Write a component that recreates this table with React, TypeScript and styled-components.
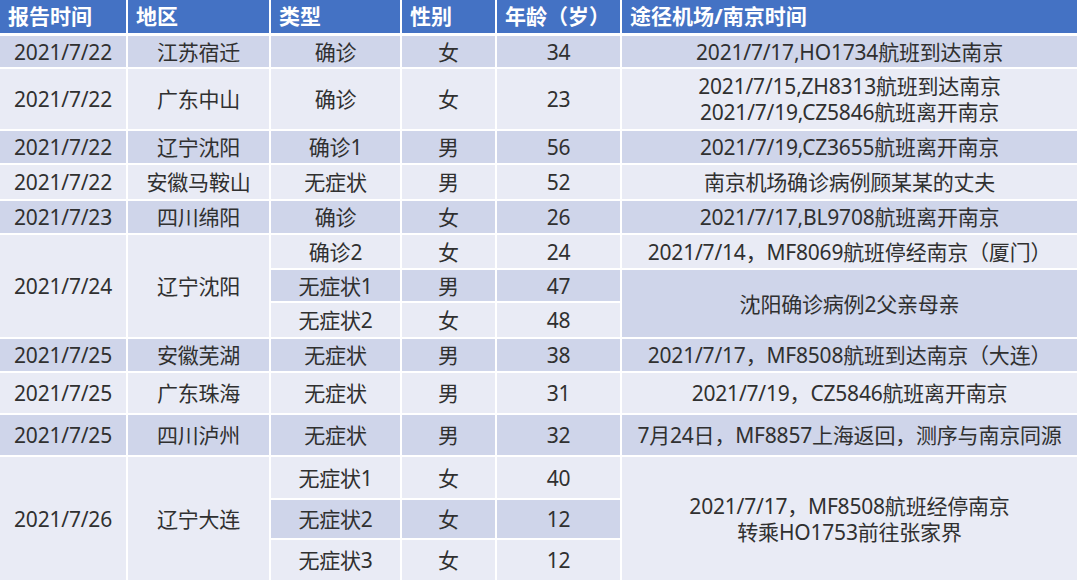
import styled, { createGlobalStyle } from 'styled-components';

const GlobalStyle = createGlobalStyle`
	html, body {
		margin: 0;
		padding: 0;
		background: #ffffff;
	}
	body {
		font-family: 'Noto Sans', 'Noto Sans CJK SC', sans-serif;
	}
`;

const Table = styled.table`
	border-collapse: separate;
	border-spacing: 0;
	table-layout: fixed;
	width: 1079px;
	font-size: 21px;
	color: #303030;
`;

const HeadRow = styled.tr`
	height: 36px;
`;

const HeadCell = styled.th<{ $w: number }>`
	box-sizing: border-box;
	width: ${({ $w }) => $w}px;
	padding: 0 0 0 8px;
	background: #4472c4;
	color: #ffffff;
	font-weight: 700;
	text-align: left;
	white-space: nowrap;
	border-right: 2px solid #ffffff;
	border-bottom: 3px solid #ffffff;
	line-height: 1;
`;

const Row = styled.tr<{ $h: number }>`
	height: ${({ $h }) => $h}px;
`;

const Cell = styled.td<{ $dark: boolean }>`
	box-sizing: border-box;
	padding: 0;
	background: ${({ $dark }) => ($dark ? '#cfd5ea' : '#e9ebf5')};
	text-align: center;
	vertical-align: middle;
	white-space: nowrap;
	line-height: 26px;
	letter-spacing: -0.2px;
	border-right: 2px solid #ffffff;
	border-bottom: 2px solid #ffffff;
`;

const Line = styled.div`
	display: block;
`;

interface CellData {
	text: string | string[];
	span?: number;
}

interface RowData {
	h: number;
	dark: boolean;
	cells: CellData[];
}

const columns = [
	{ title: '报告时间', w: 128 },
	{ title: '地区', w: 143 },
	{ title: '类型', w: 131 },
	{ title: '性别', w: 95 },
	{ title: '年龄（岁）', w: 125 },
	{ title: '途径机场/南京时间', w: 457 },
];

const c = (...texts: string[]): CellData[] => texts.map((text) => ({ text }));

const rows: RowData[] = [
	{ h: 33, dark: true, cells: c('2021/7/22', '江苏宿迁', '确诊', '女', '34', '2021/7/17,HO1734航班到达南京') },
	{
		h: 62,
		dark: false,
		cells: [
			...c('2021/7/22', '广东中山', '确诊', '女', '23'),
			{ text: ['2021/7/15,ZH8313航班到达南京', '2021/7/19,CZ5846航班离开南京'] },
		],
	},
	{ h: 34, dark: true, cells: c('2021/7/22', '辽宁沈阳', '确诊1', '男', '56', '2021/7/19,CZ3655航班离开南京') },
	{ h: 36, dark: false, cells: c('2021/7/22', '安徽马鞍山', '无症状', '男', '52', '南京机场确诊病例顾某某的丈夫') },
	{ h: 34, dark: true, cells: c('2021/7/23', '四川绵阳', '确诊', '女', '26', '2021/7/17,BL9708航班离开南京') },
	{
		h: 35,
		dark: false,
		cells: [
			{ text: '2021/7/24', span: 3 },
			{ text: '辽宁沈阳', span: 3 },
			...c('确诊2', '女', '24', '2021/7/14，MF8069航班停经南京（厦门）'),
		],
	},
	{ h: 33, dark: true, cells: [...c('无症状1', '男', '47'), { text: '沈阳确诊病例2父亲母亲', span: 2 }] },
	{ h: 36, dark: false, cells: c('无症状2', '女', '48') },
	{ h: 34, dark: true, cells: c('2021/7/25', '安徽芜湖', '无症状', '男', '38', '2021/7/17，MF8508航班到达南京（大连）') },
	{ h: 42, dark: false, cells: c('2021/7/25', '广东珠海', '无症状', '男', '31', '2021/7/19，CZ5846航班离开南京') },
	{ h: 42, dark: true, cells: c('2021/7/25', '四川泸州', '无症状', '男', '32', '7月24日，MF8857上海返回，测序与南京同源') },
	{
		h: 43,
		dark: false,
		cells: [
			{ text: '2021/7/26', span: 3 },
			{ text: '辽宁大连', span: 3 },
			...c('无症状1', '女', '40'),
			{ text: ['2021/7/17，MF8508航班经停南京', '转乘HO1753前往张家界'], span: 3 },
		],
	},
	{ h: 40, dark: true, cells: c('无症状2', '女', '12') },
	{ h: 42, dark: false, cells: c('无症状3', '女', '12') },
];

export default function App() {
	return (
		<>
			<GlobalStyle />
			<Table>
				<thead>
					<HeadRow>
						{columns.map((col) => (
							<HeadCell key={col.title} $w={col.w}>
								{col.title}
							</HeadCell>
						))}
					</HeadRow>
				</thead>
				<tbody>
					{rows.map((row, i) => (
						<Row key={i} $h={row.h}>
							{row.cells.map((cell, j) => (
								<Cell key={j} $dark={row.dark} rowSpan={cell.span}>
									{Array.isArray(cell.text)
										? cell.text.map((line) => <Line key={line}>{line}</Line>)
										: cell.text}
								</Cell>
							))}
						</Row>
					))}
				</tbody>
			</Table>
		</>
	);
}
